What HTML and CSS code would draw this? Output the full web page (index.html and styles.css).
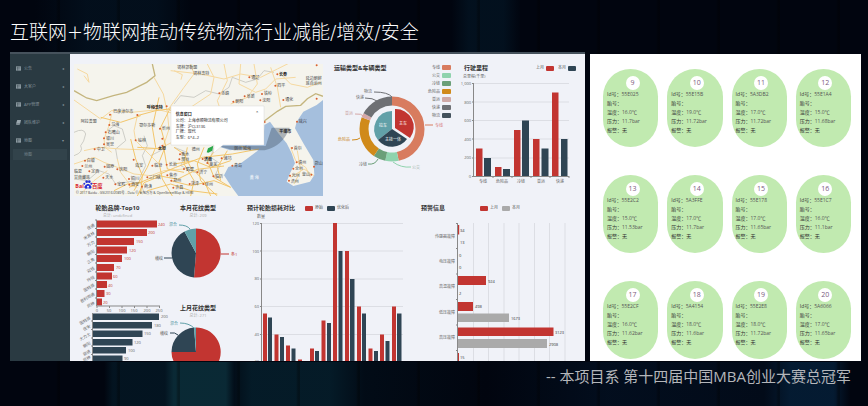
FILE: index.html
```html
<!DOCTYPE html>
<html lang="zh-CN">
<head>
<meta charset="utf-8">
<meta name="viewport" content="width=device-width, initial-scale=1">
<title>互联网+物联网推动传统物流行业</title>
<link rel="stylesheet" href="styles.css">
</head>
<body>
<header class="slide-head"><h1>互联网+物联网推动传统物流行业减能/增效/安全</h1></header>
<main class="boards">
  <section class="dashboard">
    <nav class="side">
      <ul>
        <li><a href="#"><svg class="ico" viewBox="0 0 12 12"><path d="M0 1h12v10H0z"/><path class="cut" d="M1 4h10M1 7h10M4 2v9"/></svg><span>公告</span><i>◂</i></a></li>
        <li><a href="#"><svg class="ico" viewBox="0 0 12 12"><path d="M0 1h12v10H0z"/><path class="cut" d="M1 4h10M1 7h10M4 2v9"/></svg><span>大客户</span><i>◂</i></a></li>
        <li><a href="#"><svg class="ico" viewBox="0 0 12 12"><path d="M0 1h12v10H0z"/><path class="cut" d="M1 4h10M1 7h10M4 2v9"/></svg><span>APP管理</span><i>◂</i></a></li>
        <li><a href="#"><svg class="ico" viewBox="0 0 12 12"><path d="M3 0h9l-2 9H0z"/><path d="M0 10h9v2H1z"/></svg><span>团队维护</span><i>◂</i></a></li>
        <li><a href="#"><svg class="ico" viewBox="0 0 12 12"><path d="M0 1h12v10H0z"/><path class="cut" d="M1 4h10M1 7h10M4 2v9"/></svg><span>地图</span><i>▾</i></a></li>
      </ul>
      <a class="sub" href="#">地图</a>
    </nav>
    <div class="charts">
      <div class="row top">
        <figure class="map">
          <svg viewBox="0 0 747 396">
            <path class="land" d="M0 0h747v396H0z"/>
            <path class="sea" d="M571 183l17-10 25 35 25 30 15 30 10 30-15 30-10 25 20 13 50-13 13-20-3-45-30-50-25-45 5-20 20-30 40-20 19-15v288H493l-20-27-23-35 13-25 35-10 25-18 30-22-35-7-50 7-30-10v-10h130z"/>
            <path class="border" d="M235 0l8 35-25 20-60 30-40 10-50 15-30-8-38-22"/>
            <path class="border" d="M570 172l40-30 25-15 45-3 20-20 25-15 22 8"/>
            <path class="prov" d="M0 205q30-15 35 5-5 25-15 35 10 20-20 30M100 200l20-15 25 10 10 35-30 25 5 30M210 215l10 30-15 30 10 30-20 40 15 40M0 345l40 5 35-30 30 10 20 30 60-10M300 120l20-25 40 5 35-20 40 10 30-20 10-30 40 15 35-10 20-25 30 5M260 260l-30 15M300 250l40 15-20 40 40 20 30-10M420 250l-10 30 30 20-20 40"/>
            <path class="road thin" d="M0 108l45 32 35 25 33-25 60 5 80-8 60 15M113 150l-8 35-15 40 3 25 20 15M190 155l-10 45 5 30 70 70M240 40l28 50 12 55 5 50-18 55M30 260l45-10 65 5 60 2 60-5 40-20M0 300l60-20 30 15 40 15 50 20 50 5 40-15 60-5M20 390l40-40 40-30M130 285l10 40 30 40 20 5M350 0l10 30-30 40-50 70M400 0l20 40-10 50-60 40M290 20l90 10 70 15 50-15 60 10 50-25 40-20M450 0l10 50-30 60 10 30M500 0l-5 60 50 25 30-10 30-30 60-5M540 0l10 60-30 40-50 20M590 10l20 60 10 60M620 30l30 30 50 10 40-15M300 20l25 12-4 15M10 15l30 15 5 25-15-20M650 250l15 40 30 20 15 30M670 260l10 60-20 40M650 340l40-25 30 20"/>
            <path class="road" d="M190 155l55-15 40-5 20 15M80 160l60 15 60-20M200 390l5-55-20-50-15-60M190 250l80 5 10 60 50 10M165 370l70-30 70-30 80-30 90-10 80-15M190 396l20-40 50-20 50 10 60-30 80-10M290 130l-30 60 15 55-20 50 10 50 30 51M300 250l30 20 20 40 40 40 20 46M340 250l-10 50 30 50-10 46M390 250l-20 50 10 50 50 46M430 250l-30 40 20 50 50 30M300 300l60-10 50 20 60-20M290 350l60 15 70-15 50 20M220 380l70-20 60 20 80 10M500 246l30 10M460 260l-30 50 10 40M120 380l40-20 45-5M255 100l-20 90 10 60-25 60-40 70"/>
            <path class="dots" d="M240 130h0M278 127h0M190 153h0M108 152h0M106 183h0M95 205h0M90 223h0M90 241h0M62 256h0M185 229h0M258 194h0M265 224h0M265 245h0M179 287h0M235 305h0M278 302h0M33 290h0M25 306h0M46 322h0M92 308h0M130 316h0M165 345h0M166 362h0M220 340h0M280 334h0M292 350h0M330 315h0M347 360h0M88 341h0M124 361h0M204 368h0M298 371h0M318 271h0M316 286h0M386 285h0M400 297h0M443 283h0M370 325h0M418 337h0M388 360h0M475 305h0M526 40h0M610 31h0M604 65h0M559 109h0M564 90h0M512 97h0M436 88h0M478 113h0M628 108h0M728 4h0M728 104h0M669 173h0M654 252h0M668 295h0M658 314h0M720 308h0M648 335h0M712 332h0M645 350h0M572 174h0"/>
            <path class="shade" d="M430 246h145l18-55h54q-20 55-75 68H480z"/>
            <g class="place">
              <text x="310" y="16">锡林郭勒盟</text><text x="358" y="33">锡林浩特</text><text class="big" x="218" y="134">呼和浩特</text><text x="118" y="147">巴彦淖尔市</text><text x="196" y="188">鄂尔多斯</text><text x="20" y="176">阿拉善盟</text><text x="112" y="186">乌海</text><text x="101" y="210">石嘴山</text><text x="96" y="229">银川</text><text x="96" y="246">吴忠</text><text x="68" y="261">中卫</text><text x="192" y="234">榆林</text><text class="big" x="252" y="259">太原</text><text x="264" y="199">忻州</text><text x="184" y="309">延安</text><text x="241" y="309">临汾</text><text x="284" y="306">长治</text><text x="38" y="294">白银</text><text x="31" y="311">兰州</text><text x="52" y="326">定西</text><text x="0" y="326">临夏</text><text x="97" y="312">固原</text><text x="136" y="321">庆阳</text><text x="170" y="349">铜川</text><text x="172" y="367">西安</text><text x="224" y="344">三门峡</text><text x="286" y="338">焦作</text><text x="298" y="355">郑州</text><text x="336" y="320">鹤壁</text><text x="351" y="364">菏泽</text><text x="94" y="345">天水</text><text x="130" y="366">宝鸡</text><text x="210" y="372">商洛</text><text x="304" y="375">许昌</text><text x="0" y="346">甘南藏族</text><text x="322" y="276">衡水</text><text x="322" y="291">邢台</text><text class="big" x="390" y="292">济南</text><text x="406" y="306">莱芜</text><text x="449" y="288">潍坊</text><text x="376" y="330">济宁</text><text x="424" y="342">临沂</text><text x="393" y="365">徐州</text><text x="480" y="310">青岛</text><text x="353" y="260">德州</text><text x="480" y="259">烟台 威海</text><text x="532" y="44">通辽</text><text class="big" x="615" y="36">长春</text><text x="610" y="70">四平</text><text x="565" y="114">沈阳</text><text x="570" y="94">铁岭</text><text x="518" y="101">阜新</text><text x="442" y="92">赤峰</text><text x="484" y="117">朝阳</text><text x="634" y="112">通化</text><text x="695" y="49">延边朝鲜</text><text x="695" y="64">族自治州</text><text x="674" y="177">咸兴</text><text class="big" x="616" y="208">平壤市</text><text x="659" y="257">首尔</text><text x="673" y="299">清州</text><text x="663" y="318">全州</text><text x="722" y="304">蔚山</text><text x="653" y="339">光州</text><text x="684" y="337">釜山</text><text x="650" y="356">济州</text><text class="water" x="527" y="346">黄 海</text>
              <text x="6" y="390" class="copy">© 2017 Baidu - GS(2016)2089号 - Data © 长地万方 &amp; OpenStreetMap &amp; HERE</text>
            </g>
            <g class="baidu"><text x="4" y="373">Bai</text><text x="54" y="373">百度</text><path d="M42 360c-6 0-13 8-10 12 3 4 7 1 10 1s8 3 10-1c3-4-4-12-10-12z"/><circle cx="31" cy="359" r="3"/><circle cx="38" cy="353" r="4"/><circle cx="46" cy="353" r="4"/><circle cx="52" cy="359" r="3"/><circle class="nose" cx="42" cy="368" r="3"/></g>
            <path class="pin" d="M398 265l4-12 16-8-3 15-12 6z"/>
            <path class="pop" d="M291 126h279v117H447l-28 24 1-24H291z"/>
            <g class="info"><text class="cap" x="305" y="157">信息窗口</text><text x="305" y="175">公司：上海卓顺物流有限公司</text><text x="305" y="192">车牌：沪CL3136</text><text x="305" y="208">厂牌：现代</text><text x="305" y="225">车型：6*4=2</text><text x="546" y="146">×</text></g>
          </svg>
        </figure>
        <figure>
          <header><h2>运输类型&amp;车辆类型</h2></header>
          <svg viewBox="325 72 130 129">
            <g transform="translate(392 129)">
              <g class="ring">
                <path stroke="#d87c5f" pathLength="360" stroke-dasharray="168 360" d="M0-28a28 28 0 0 1 0 56a28 28 0 0 1 0-56"/>
                <path stroke="#8fd3ad" pathLength="360" stroke-dasharray="0 168 24 360" d="M0-28a28 28 0 0 1 0 56a28 28 0 0 1 0-56"/>
                <path stroke="#6b9f78" pathLength="360" stroke-dasharray="0 192 22 360" d="M0-28a28 28 0 0 1 0 56a28 28 0 0 1 0-56"/>
                <path stroke="#d08a1a" pathLength="360" stroke-dasharray="0 214 77 360" d="M0-28a28 28 0 0 1 0 56a28 28 0 0 1 0-56"/>
                <path stroke="#d5a8a8" pathLength="360" stroke-dasharray="0 291 8 360" d="M0-28a28 28 0 0 1 0 56a28 28 0 0 1 0-56"/>
                <path stroke="#6e7074" pathLength="360" stroke-dasharray="0 299 61 360" d="M0-28a28 28 0 0 1 0 56a28 28 0 0 1 0-56"/>
              </g>
              <path class="teal" d="M0 0V-18A18 18 0 0 0-14 11z"/>
              <path class="navy" d="M0 0L-14 11A18 18 0 0 0 15 10z"/>
              <path class="red" d="M3-1V-20A18 18 0 0 1 18 9z"/>
              <g class="white mid"><text x="-9" y="-2">拉车</text><text x="11" y="-4">主车</text><text x="1" y="12">主挂一体</text></g>
            </g>
            <g class="lead"><path stroke="#6e7074" d="M392 97q-4-5-18-5M377 101q-4-3-12-3"/><path stroke="#d5a8a8" d="M365 117q-4-4-10-3"/><path stroke="#d87c5f" d="M425 125h8"/><path stroke="#d08a1a" d="M360 138q-2 2-8 2"/><path stroke="#6b9f78" d="M378 159q-3 6-10 5"/><path stroke="#8fd3ad" d="M393 162q8 6 18 5"/></g>
            <g class="lab"><text x="364" y="93">物流</text><text x="356" y="99">快递</text><text class="pk" x="345" y="115">普运</text><text class="or" x="435" y="127">专线</text><text class="gd" x="338" y="141">危险品</text><text x="359" y="166">冷链</text><text class="lt" x="412" y="169">公交</text></g>
            <g class="lab end"><text x="440" y="69">专线</text><text x="440" y="77">公交</text><text x="440" y="85">冷链</text><text x="440" y="93">危险品</text><text x="440" y="101">普运</text><text x="440" y="109">快递</text><text x="440" y="117">物流</text></g>
            <rect x="442" y="65" width="9" height="5" rx="1" fill="#d87c5f"/><rect x="442" y="73" width="9" height="5" rx="1" fill="#8fd3ad"/><rect x="442" y="81" width="9" height="5" rx="1" fill="#6b9f78"/><rect x="442" y="89" width="9" height="5" rx="1" fill="#d08a1a"/><rect x="442" y="97" width="9" height="5" rx="1" fill="#cfa9a6"/><rect x="442" y="105" width="9" height="5" rx="1" fill="#6e7074"/><rect x="442" y="113" width="9" height="5" rx="1" fill="#43525c"/>
          </svg>
        </figure>
        <figure>
          <header><h2>行驶里程</h2><p class="legend push"><span>上月</span><b class="k-red"></b><span>本月</span><b class="k-navy"></b></p></header>
          <svg viewBox="455 72 130 129">
            <text class="lab" x="463" y="78">总里程(千里)</text>
            <path class="grid" d="M474 83.500h95M474 102h95M474 120.500h95M474 139h95M474 158h95"/>
            <path class="red" d="M476 148.500h6.500v28h-6.500zM495 167h6.500v9.500h-6.500zM514 130h6.500v46.500h-6.500zM533 139h6.500v37.500h-6.500zM552 92.500h6.500v84h-6.500z"/>
            <path class="navy" d="M484 158h7v18.500h-7zM503 169h7v7.500h-7zM522 120.500h7v56h-7zM541.500 148.500h7v28h-7zM561 139h6.500v37.500H561z"/>
            <path class="axis" d="M473.500 83v93.500H569M472 83.500h2M472 102h2M472 120.500h2M472 139h2M472 158h2M472 176.500h2M493 176v2M512 176v2M531 176v2M550 176v2M569 176v2"/>
            <g class="lab end"><text x="471" y="85">1,000</text><text x="471" y="104">800</text><text x="471" y="122">600</text><text x="471" y="141">400</text><text x="471" y="159">200</text><text x="471" y="178">0</text></g>
            <g class="lab mid"><text x="483" y="183">专线</text><text x="502" y="183">危险品</text><text x="521" y="183">冷链</text><text x="541" y="183">普运</text><text x="560" y="183">快递</text></g>
          </svg>
        </figure>
      </div>
      <div class="row low">
        <figure class="centered">
          <header><h2>轮胎品牌-Top10</h2></header>
          <p class="total">总计: undefined</p>
          <svg viewBox="70 219 95 142">
            <path class="red" d="M97 220.500h60v7H97zM97 229h50v7H97zM97 238h37v7H97zM97 246.500h30v7H97zM97 255h25v7H97zM97 264h17v7H97zM97 272.500h15v7H97zM97 281h10v7H97zM97 290h7.500v7H97zM97 298.500h5v7h-5z"/>
            <path class="navy" d="M93 313.500h66v6.500H93zM93 322h59v6.500H93zM93 330.500h49.500v6.500H93zM93 339h39.500v6.500H93zM93 347h33v6.500H93zM93 355.500h29.500V361H93z"/>
            <path class="axis" d="M96.500 220v86H160M95 220h2M95 228.500h2M95 237h2M95 246h2M95 254.500h2M95 263h2M95 272h2M95 280.500h2M95 289h2M95 298h2M97 306v2M109.500 306v2M122 306v2M134.500 306v2M147 306v2M159.500 306v2M92.500 313v48M91 321h2M91 329.500h2M91 338h2M91 346h2M91 354.500h2"/>
            <g class="lab redt"><text x="158" y="226">240</text><text x="148" y="234">200</text><text x="136" y="243">150</text><text x="129" y="252">120</text><text x="124" y="260">100</text><text x="116" y="269">70</text><text x="113" y="278">60</text><text x="108" y="287">40</text><text x="106" y="295">30</text><text x="103" y="304">20</text></g>
            <g class="lab mid"><text x="97" y="312">0</text><text x="109" y="312">50</text><text x="122" y="312">100</text><text x="134" y="312">150</text><text x="147" y="312">200</text><text x="159" y="312">250</text></g>
            <g class="lab"><text x="161" y="318">200</text><text x="154" y="327">180</text><text x="144" y="335">150</text><text x="134" y="344">120</text><text x="128" y="352">100</text><text x="124" y="360">90</text></g>
            <g class="lab end"><text transform="translate(95 226)rotate(-30)">佳通</text><text transform="translate(95 234)rotate(-30)">米其林</text><text transform="translate(95 243)rotate(-30)">万力</text><text transform="translate(95 252)rotate(-30)">朝阳</text><text transform="translate(95 260)rotate(-30)">三角</text><text transform="translate(95 269)rotate(-30)">双钱</text><text transform="translate(95 278)rotate(-30)">玲珑</text><text transform="translate(95 286)rotate(-30)">固特异</text><text transform="translate(95 295)rotate(-30)">普利司通</text><text transform="translate(95 304)rotate(-30)">风神</text><text transform="translate(91 319)rotate(-30)">固特异</text><text transform="translate(91 327)rotate(-30)">佳安</text><text transform="translate(91 335)rotate(-30)">大力士</text><text transform="translate(91 344)rotate(-30)">朝阳</text><text transform="translate(91 352)rotate(-30)">前进</text><text transform="translate(91 358)rotate(-30)">风神</text></g>
          </svg>
        </figure>
        <div class="pies">
          <figure class="centered">
            <header><h2>本月花纹类型</h2></header>
            <p class="total">总计: 209</p>
            <svg viewBox="165 219 66 82">
              <g transform="translate(196 253)"><path class="red" d="M0 0V-24.500A24.500 24.500 0 1 1-2 24.400z"/><path class="navy" d="M0 0L-2 24.400A24.500 24.500 0 0 1-11.500-21.600z"/><path class="teal" d="M0 0L-11.500-21.600A24.500 24.500 0 0 1 0-24.500z"/></g>
              <g class="lead"><path stroke="#61a0a8" d="M190 229q-3-4-11-4"/><path stroke="#2f4554" d="M172 258h-8"/><path stroke="#c23531" d="M221 254h8"/></g>
              <g class="lab"><text class="tl" x="169" y="226">混合</text><text x="155" y="260">横纹</text><text class="rd" x="231" y="256">条1</text></g>
            </svg>
          </figure>
          <figure class="centered">
            <header><h2>上月花纹类型</h2></header>
            <p class="total">总计: 271</p>
            <svg viewBox="165 319 66 42">
              <path class="red" d="M196 352v-24.500A24.500 24.500 0 0 1 219 361H173.500Q171.500 357 171.500 352z"/><path class="navy" d="M196 352H171.500A24.500 24.500 0 0 1 194 327.600z"/><path class="teal" d="M196 352L194 327.600 196 327.500z"/>
              <g class="lead"><path stroke="#61a0a8" d="M194 328q-5-5-14-5"/><path stroke="#2f4554" d="M178 335q-3-3-8-2"/></g>
              <g class="lab"><text class="tl" x="170" y="325">混合</text><text x="160" y="335">横纹</text></g>
            </svg>
          </figure>
        </div>
        <figure>
          <header class="inset"><h2>预计轮胎损耗对比</h2><p class="legend"><b class="k-red"></b><span>原始</span><b class="k-navy"></b><span>优化后</span></p></header>
          <svg viewBox="231 212 174 149">
            <text class="lab" x="257" y="218">数量</text>
            <path class="grid" d="M262 223.500h141M262 251h141M262 279h141M262 306.500h141M262 334.500h141"/>
            <path class="red" d="M263 313.500h4V361h-4zM274.500 334.500h4V361h-4zM286 345.500h4V361h-4zM298 359.500h4V361h-4zM310 348.500h4V361h-4zM321.500 320.500h4V361h-4zM333 223h4v138h-4zM345 251h4v110h-4zM357 306.500h4V361h-4zM368.500 348.500h4V361h-4zM380 334.500h4V361h-4zM392 306.500h4V361h-4z"/>
            <path class="navy" d="M268 317.500h4V361h-4zM280 337h4v24h-4zM291.500 348.500h4V361h-4zM315 351h4v10h-4zM327 323h4v38h-4zM338.500 251h4v110h-4zM350 279h4.500v82H350zM362 313.500h4V361h-4zM374 351h4v10h-4zM385.500 341h4v20h-4zM397 313.500h4.500V361H397z"/>
            <path class="axis" d="M261.500 223v138M260 223.500h2M260 251h2M260 279h2M260 306.500h2M260 334.500h2"/>
            <g class="lab end"><text x="259" y="225">120</text><text x="259" y="253">100</text><text x="259" y="280">80</text><text x="259" y="308">60</text><text x="259" y="336">40</text><text x="259" y="363">20</text></g>
          </svg>
        </figure>
        <figure>
          <header class="inset"><h2>预警信息</h2><p class="legend far"><b class="k-red"></b><span>上月</span><b class="k-gray"></b><span>本月</span></p></header>
          <svg viewBox="405 212 180 149">
            <path class="grid" d="M473.500 223v138M488.500 223v138M504 223v138M519 223v138M534.500 223v138M549.500 223v138M565 223v138"/>
            <path class="red" d="M458 225h1.200v9.500H458zM458 276h28v9h-28zM458 302h15v9h-15zM458 327.500h95.500v8.500H458zM458 353h1v8h-1z"/>
            <path class="gray" d="M458 313.500h51v8.500h-51zM458 339h89v9h-89z"/>
            <path class="axis" d="M457.500 223v138M456 223.500h2M456 248.500h2M456 274h2M456 299.500h2M456 325h2M456 350.500h2"/>
            <g class="lab dark"><text x="460" y="232">34</text><text x="460" y="244">13</text><text x="459" y="257">0</text><text x="459" y="269">0</text><text x="488" y="283">924</text><text x="459" y="295">2</text><text x="475" y="308">498</text><text x="511" y="320">1673</text><text x="555" y="334">3123</text><text x="549" y="346">2908</text><text x="460" y="359">15</text></g>
            <g class="lab end"><text x="455" y="238">传感器故障</text><text x="455" y="263">电压故障</text><text x="455" y="288">高温故障</text><text x="455" y="314">低压故障</text><text x="455" y="339">高压故障</text></g>
          </svg>
        </figure>
      </div>
    </div>
  </section>
  <section class="tyres">
    <article><h3>9</h3><p>Id号：<span>55E025</span></p><p>胎号：</p><p>温度：<span>16.0℃</span></p><p>压力：<span>11.7bar</span></p><p>报警：无</p></article>
    <article><h3>10</h3><p>Id号：<span>55E15B</span></p><p>胎号：</p><p>温度：<span>19.0℃</span></p><p>压力：<span>11.72bar</span></p><p>报警：无</p></article>
    <article><h3>11</h3><p>Id号：<span>5A3DB2</span></p><p>胎号：</p><p>温度：<span>17.0℃</span></p><p>压力：<span>11.72bar</span></p><p>报警：无</p></article>
    <article><h3>12</h3><p>Id号：<span>55E1A4</span></p><p>胎号：</p><p>温度：<span>15.0℃</span></p><p>压力：<span>11.68bar</span></p><p>报警：无</p></article>
    <article><h3>13</h3><p>Id号：<span>55E2C2</span></p><p>胎号：</p><p>温度：<span>15.0℃</span></p><p>压力：<span>11.53bar</span></p><p>报警：无</p></article>
    <article><h3>14</h3><p>Id号：<span>5A3FFE</span></p><p>胎号：</p><p>温度：<span>17.0℃</span></p><p>压力：<span>11.7bar</span></p><p>报警：无</p></article>
    <article><h3>15</h3><p>Id号：<span>55E178</span></p><p>胎号：</p><p>温度：<span>17.0℃</span></p><p>压力：<span>11.65bar</span></p><p>报警：无</p></article>
    <article><h3>16</h3><p>Id号：<span>55E1C7</span></p><p>胎号：</p><p>温度：<span>16.0℃</span></p><p>压力：<span>11.1bar</span></p><p>报警：无</p></article>
    <article><h3>17</h3><p>Id号：<span>55E2CF</span></p><p>胎号：</p><p>温度：<span>16.0℃</span></p><p>压力：<span>11.62bar</span></p><p>报警：无</p></article>
    <article><h3>18</h3><p>Id号：<span>5A4154</span></p><p>胎号：</p><p>温度：<span>18.0℃</span></p><p>压力：<span>11.6bar</span></p><p>报警：无</p></article>
    <article><h3>19</h3><p>Id号：<span>55E2E8</span></p><p>胎号：</p><p>温度：<span>18.0℃</span></p><p>压力：<span>11.72bar</span></p><p>报警：无</p></article>
    <article><h3>20</h3><p>Id号：<span>5A6066</span></p><p>胎号：</p><p>温度：<span>17.0℃</span></p><p>压力：<span>11.65bar</span></p><p>报警：无</p></article>
  </section>
</main>
<footer>-- 本项目系 第十四届中国MBA创业大赛总冠军</footer>
</body>
</html>
```
FILE: styles.css
```css
* { box-sizing: border-box; margin: 0; padding: 0; }

body {
  min-height: 100vh;
  color: #fff;
  font-family: "Open Sans", "Noto Sans CJK SC", sans-serif;
  background-color: #01050f;
  background-image:
    repeating-linear-gradient(90deg, transparent 0 56px, rgba(0, 0, 0, .3) 58px 60px),
    linear-gradient(90deg, transparent 12%, rgba(5, 30, 44, .6) 13% 19%, rgba(12, 50, 62, .8) 20% 26%, rgba(3, 20, 32, .6) 27%, rgba(6, 36, 50, .7) 29% 38%, rgba(3, 18, 30, .5) 42%, transparent 56%, rgba(4, 22, 44, .5) 70%, rgba(4, 20, 40, .4) 88%, rgba(5, 32, 58, .8) 91% 96%, transparent 98%),
    linear-gradient(90deg, transparent 4%, rgba(4, 24, 40, .5) 10% 18%, transparent 22% 52%, rgba(4, 24, 40, .6) 54% 58%, transparent 60%);
  background-size: auto, 100% 44px, 100% 52px;
  background-position: 0 0, 0 100%, 0 0;
  background-repeat: repeat, no-repeat, no-repeat;
}

.slide-head { height: 52px; padding: 18px 10px 0; }
h1 { font-family: "DejaVu Sans", "Noto Sans CJK SC", sans-serif; font-size: 19px; font-weight: 300; line-height: 28px; white-space: nowrap; }

.boards {
  display: grid;
  grid-template-columns: 575fr 271fr;
  gap: 5px;
  padding: 0 7px 0 10px;
}

.dashboard {
  display: grid;
  grid-template-columns: 60px 1fr;
  min-width: 0;
  overflow: hidden;
  border-top: 2px solid #46525c;
  color: #333;
  background: #f0f2f8;
}

/* sidebar */
.side { padding: 5px 3px; background: #2a3a42; }
.side ul { list-style: none; }
.side li a {
  display: flex;
  align-items: center;
  height: 18px;
  padding: 0 3px;
  color: #84929a;
  font-size: 4px;
  text-decoration: none;
}
.side .ico { width: 5px; height: 5px; margin-right: 3px; fill: #9aa7ae; }
.side .cut { stroke: #2a3a42; }
.side i { margin-left: auto; font-style: normal; }
.sub {
  display: block;
  padding-left: 11px;
  color: #73828a;
  background: #32434b;
  font-size: 4px;
  line-height: 11px;
  text-decoration: none;
}

/* chart panels */
.charts { min-width: 0; }
.row { display: grid; }
.top { grid-template-columns: 255fr 130fr 130fr; }
.low { grid-template-columns: 95fr 66fr 174fr 180fr; }
figure { min-width: 0; }
figure svg { display: block; width: 100%; overflow: visible; }
.map { padding: 10px 2px 5px 4px; }
.map svg { overflow: hidden; }
figure header { display: flex; align-items: center; height: 18px; padding: 10px 9px 0; }
.low header { height: 11px; padding: 3px 0 0; }
.low header.inset { padding-left: 16px; }
.centered header { justify-content: center; }
h2 { color: #333; font-size: 6px; line-height: 8px; white-space: nowrap; }
.total { height: 7px; color: #aaa; font-size: 4px; line-height: 7px; text-align: center; }
.legend { display: flex; align-items: center; gap: 2px; margin-left: 10px; color: #555; font-size: 4px; line-height: 8px; white-space: nowrap; }
.legend.push { margin-left: auto; }
.legend.far { margin-left: 35px; }
.legend b { width: 8px; height: 5px; border-radius: 1px; }
.legend span + b { margin-left: 2px; }
.k-red { background: #c23531; }
.k-navy { background: #2f4554; }
.k-gray { background: #aaa; }
.legend.push span + b { margin-left: 0; }
.legend.push b + span { margin-left: 2px; }

.red { fill: #c23531; }
.navy { fill: #2f4554; }
.teal { fill: #61a0a8; }
.gray { fill: #aaa; }
.grid { stroke: #dcdee4; stroke-width: 1; }
.axis { fill: none; stroke: #888; stroke-width: 1; }
.ring path { fill: none; stroke-width: 9; }
.lead path { fill: none; }
.lab { fill: #666; font-size: 4px; }
.dark { fill: #333; }
.redt, .rd { fill: #c23531; }
.tl { fill: #61a0a8; }
.pk { fill: #c9a0a0; }
.or { fill: #d87c7c; }
.gd { fill: #ca8622; }
.lt { fill: #a5b5ad; }
.end { text-anchor: end; }
.mid { text-anchor: middle; }
.white { fill: #fff; font-size: 4px; }

/* map */
.land { fill: #f5f4ed; }
.sea { fill: #a5bfdd; }
.border { fill: none; stroke: #c4b57e; stroke-width: 4; }
.prov { fill: none; stroke: #b9b9b4; stroke-width: 2; }
.road { fill: none; stroke: #f3c66c; stroke-width: 3; }
.road.thin { stroke: #f6d9a0; }
.dots { stroke: #d9602f; stroke-width: 6; stroke-linecap: round; }
.place { fill: #444; font-size: 12px; }
.big { font-weight: bold; fill: #222; }
.water { fill: #fff; }
.copy { font-size: 10px; }
.shade { fill: #456; opacity: .4; }
.baidu { fill: #d9232b; font-size: 16px; font-weight: bold; }
.baidu path, .baidu circle { fill: #2733d6; }
.baidu .nose { fill: #fff; }
.pin { fill: #2ba84a; }
.pop { fill: #fff; stroke: #ccc; stroke-width: 1; }
.info { fill: #222; font-size: 12px; }
.cap { font-weight: bold; }

/* tyre sensor cards */
.tyres {
  display: grid;
  grid-template-columns: repeat(4, 1fr);
  align-content: start;
  gap: 28px 9px;
  margin-top: 2px;
  padding: 15px 10px 2px 13px;
  background: #fff;
}
.tyres article {
  height: 78px;
  min-width: 0;
  padding: 7px 0 0 4px;
  border-radius: 28px;
  color: #333;
  background: #c1eab0;
  font-size: 5px;
  line-height: 9px;
  white-space: nowrap;
}
.tyres h3 {
  width: 14px;
  height: 14px;
  margin: 0 auto;
  border-radius: 50%;
  color: #7a5a80;
  background: #fff;
  font-size: 7px;
  font-weight: 400;
  line-height: 14px;
  text-align: center;
}
.tyres span { color: #555; }

footer {
  padding: 4px 17px 0;
  color: #b4b6ba;
  font-size: 15px;
  line-height: 22px;
  text-align: right;
}
```
